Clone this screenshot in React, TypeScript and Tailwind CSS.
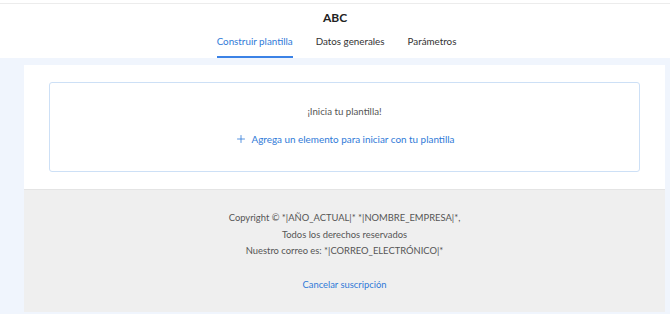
import { Plus } from 'lucide-react';

const tabs = ['Construir plantilla', 'Datos generales', 'Parámetros'];

export default function App() {
  return (
    <div className="h-[314px] w-[670px] overflow-hidden bg-[#f0f5fd] font-['Lato','Open_Sans',sans-serif]">
      <header className="h-[58px] bg-white border-t-[3px] border-t-white">
        <div className="border-t border-[#ececec] pt-[6px] text-center text-[12px] font-bold leading-[16px] text-[#222]">
          ABC
        </div>
        <nav className="mt-[8px] flex justify-center gap-[23px] pl-[3px]">
          {tabs.map((tab, i) => (
            <div
              key={tab}
              className={`pb-[7px] text-[9.8px] leading-[15px] border-b-[2px] ${
                i === 0 ? 'border-[#3b82e6] text-[#2f7ad8]' : 'border-transparent text-[#333]'
              }`}
            >
              {tab}
            </div>
          ))}
        </nav>
      </header>

      <main className="pl-[24px] pr-[5px] pt-[7px]">
        <section className="bg-white px-[25px] pt-[17px] pb-[17px]">
          <div className="flex h-[90px] flex-col items-center justify-center rounded-[3px] border border-[#cde0f6] pb-[4px]">
            <p className="text-[9.7px] leading-[14px] text-[#555]">¡Inicia tu plantilla!</p>
            <button className="mt-[14px] flex items-center gap-[5px] text-[9.9px] leading-[14px] text-[#2f7ad8]">
              <Plus className="h-[12px] w-[12px]" strokeWidth={1.6} />
              Agrega un elemento para iniciar con tu plantilla
            </button>
          </div>
        </section>
        <footer className="h-[123px] border-t border-[#e4e4e4] bg-[#efefef] pt-[20px] text-center text-[9.4px] leading-[16.5px] text-[#555]">
          <p>Copyright © *|AÑO_ACTUAL|* *|NOMBRE_EMPRESA|*,</p>
          <p>Todos los derechos reservados</p>
          <p>Nuestro correo es: *|CORREO_ELECTRÓNICO|*</p>
          <p className="mt-[17px] text-[#2f7ad8]">Cancelar suscripción</p>
        </footer>
      </main>
    </div>
  );
}
